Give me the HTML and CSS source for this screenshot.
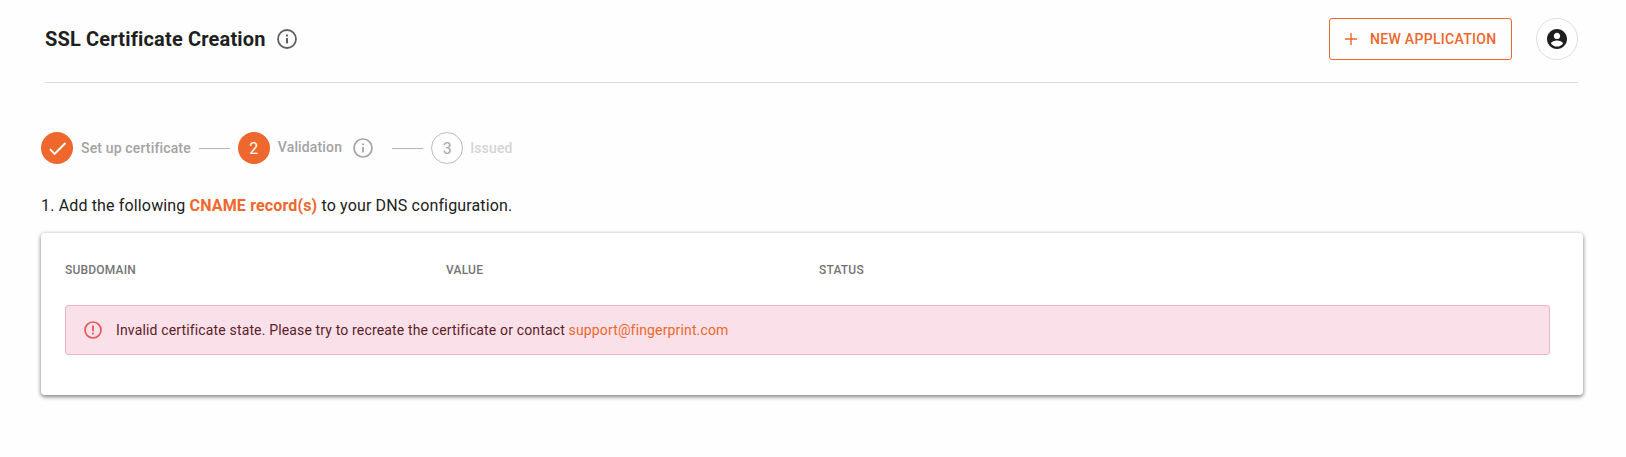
FILE: index.html
```html
<!DOCTYPE html>
<html lang="en">
<head>
<meta charset="utf-8">
<title>SSL Certificate Creation</title>
<link rel="stylesheet" href="styles.css">
</head>
<body>
<main class="page">
  <header class="header">
    <div class="title-group">
      <h1 class="title">SSL Certificate Creation</h1>
      <svg class="icon-info" viewBox="0 0 20 20" width="20" height="20"><circle cx="10" cy="10" r="9" fill="none" stroke="#616161" stroke-width="1.8"/><rect x="9" y="9" width="2" height="5.400" fill="#616161"/><rect x="9" y="5.500" width="2" height="2" fill="#616161"/></svg>
    </div>
    <div class="actions">
      <button class="btn-new"><svg viewBox="0 0 14 14" width="14" height="14"><path d="M7 1v12M1 7h12" stroke="#ee672c" stroke-width="1.4" fill="none"/></svg><span>NEW APPLICATION</span></button>
      <div class="avatar"><svg viewBox="0 0 24 24" width="24" height="24"><path fill="#1f1f1f" fill-rule="evenodd" d="M12 2C6.480 2 2 6.480 2 12s4.480 10 10 10 10-4.480 10-10S17.520 2 12 2zm0 3.700c1.800 0 3.200 1.400 3.200 3.200S13.800 12.100 12 12.100 8.800 10.700 8.800 8.900 10.200 5.700 12 5.700zm0 13.900c-2.500 0-4.700-1.200-6-3.100.1-2.100 4-3.100 6-3.100s5.900 1 6 3.100c-1.300 1.900-3.500 3.100-6 3.100z"/></svg></div>
    </div>
  </header>

  <ol class="stepper">
    <li class="step">
      <span class="dot dot-on"><svg viewBox="0 0 24 24" width="23" height="23"><path fill="#fff" d="M9 16.170L4.830 12l-1.420 1.410L9 19 21 7l-1.410-1.410z"/></svg></span>
      <span class="label">Set up certificate</span>
    </li>
    <li class="line line-a"></li>
    <li class="step">
      <span class="dot dot-on">2</span>
      <span class="label label-up">Validation</span>
      <svg class="icon-step" viewBox="0 0 20 20" width="20" height="20"><circle cx="10" cy="10" r="9" fill="none" stroke="#a3a3a3" stroke-width="1.700"/><rect x="9.100" y="9" width="1.800" height="5.400" fill="#a3a3a3"/><rect x="9.100" y="5.500" width="1.800" height="1.800" fill="#a3a3a3"/></svg>
    </li>
    <li class="line line-b"></li>
    <li class="step">
      <span class="dot dot-off">3</span>
      <span class="label label-off">Issued</span>
    </li>
  </ol>

  <p class="instruction">1. Add the following <strong class="accent">CNAME record(s)</strong> to your DNS configuration.</p>

  <section class="card">
    <div class="cols">
      <span>SUBDOMAIN</span>
      <span>VALUE</span>
      <span>STATUS</span>
    </div>
    <div class="alert">
      <svg viewBox="0 0 20 20" width="20" height="20"><circle cx="10" cy="10" r="8" fill="none" stroke="#e5575a" stroke-width="1.700"/><rect x="9.100" y="5.500" width="1.800" height="5.800" fill="#e5575a"/><rect x="9.100" y="12.600" width="1.800" height="1.800" fill="#e5575a"/></svg>
      <span class="alert-text">Invalid certificate state. Please try to recreate the certificate or contact <a class="alert-link" href="#">support@fingerprint.com</a></span>
    </div>
  </section>
</main>
</body>
</html>
```

FILE: styles.css
```css
* { box-sizing: border-box; }
html, body { margin: 0; height: 100%; }
body {
  background: #fefefe;
  font-family: Roboto, "Liberation Sans", sans-serif;
  color: #1f1f1f;
}
.page { padding: 18px 43px 0 41px; width: 1626px; }
.header {
  margin: 0 5px 0 4px;
  height: 65px;
  border-bottom: 1px solid #dcdcdc;
  display: flex;
  justify-content: space-between;
  align-items: flex-start;
}
.title-group { display: flex; align-items: center; gap: 11px; height: 42px; }
.title { margin: 0; font-size: 20px; font-weight: 700; line-height: 42px; letter-spacing: 0.17px; color: #1f1f1f; }
.actions { display: flex; gap: 24px; }
.btn-new {
  width: 183px; height: 42px;
  background: transparent;
  border: 1px solid #ee672c;
  border-radius: 3px;
  color: #ee672c;
  font: 500 14px Roboto, sans-serif;
  letter-spacing: 0.3px;
  display: flex; align-items: center; gap: 12px;
  padding: 0 0 0 14px;
}
.avatar {
  width: 42px; height: 42px;
  border: 1px solid #dedede; border-radius: 50%;
  display: flex; align-items: center; justify-content: center;
}
.stepper {
  list-style: none; margin: 49px 0 0; padding: 0;
  display: flex; align-items: center; height: 32px;
}
.step { display: flex; align-items: center; }
.dot {
  width: 32px; height: 32px; border-radius: 50%;
  display: flex; align-items: center; justify-content: center;
  font-size: 16px;
}
.dot-on { background: #ee672c; color: #fff; }
.dot-off { border: 1px solid #bdbdbd; color: #a8a8a8; }
.label { margin-left: 8px; font-size: 14px; font-weight: 500; color: #a3a3a3; letter-spacing: 0.15px; }
.label-up { position: relative; top: -1px; }
.label-off { margin-left: 7px; color: #d4d4d4; }
.icon-step { margin-left: 11px; }
.line { height: 1px; background: #b5b5b5; width: 31px; }
.line-a { margin: 0 8px; }
.line-b { margin: 0 8px 0 19px; }
.instruction { margin: 30px 0 0; font-size: 16px; line-height: 24px; letter-spacing: 0.15px; color: #212121; }
.accent { color: #ee672c; font-weight: 700; }
.card {
  margin-top: 15px;
  width: 1542px; height: 162px;
  background: #fff;
  border-radius: 4px;
  box-shadow: 0 2px 4px rgba(0,0,0,.45), 0 0 4px rgba(0,0,0,.12);
  padding: 24px;
}
.cols {
  display: grid; grid-template-columns: 381px 373px 1fr;
  font-size: 12px; font-weight: 500; letter-spacing: 0.2px; color: #757575; line-height: 26px;
}
.alert {
  margin-top: 22px; width: 1485px; height: 50px;
  background: #fae0e9;
  border: 1px solid #edb2c6;
  border-radius: 3px;
  display: flex; align-items: center; gap: 13px;
  padding-left: 17px;
}
.alert-text { font-size: 14px; padding-bottom: 1px; color: #5c2228; letter-spacing: 0.15px; }
.alert-link { color: #ee672c; text-decoration: none; }
```
